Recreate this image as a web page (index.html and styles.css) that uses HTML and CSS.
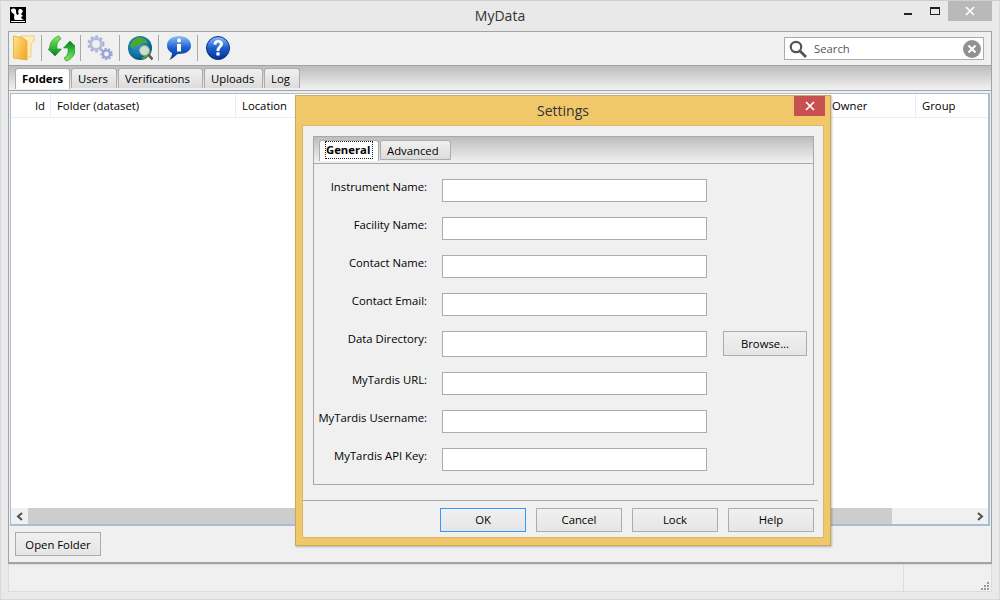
FILE: index.html
```html
<!doctype html>
<html lang="en">
<head>
	<meta charset="UTF-8" />
	<title>MyData</title>
	<link rel="stylesheet" href="styles.css">
</head>
<body>

<div class="window">
	<div class="titlebar">
		<svg class="app-icon" width="16" height="16" viewBox="0 0 16 16">
			<rect width="16" height="16" fill="#000"/>
			<path d="M1 3 C2 1 5 1 6 3 C6 5 6 6 7 8 L9 7 L8 5 L9 2 L11 2 L13 4 L12 6 L11 7 L13 9 L11 10 L12 12 L14 13 L5 13 C3 11 5 8 4 7 C3 6 1 6 1 3 Z" fill="#fff"/>
			<rect x="1" y="14" width="14" height="1" fill="#fff"/>
		</svg>
		<div class="title">MyData</div>
		<div class="winbtns">
			<span class="winbtn"><i class="min"></i></span>
			<span class="winbtn"><i class="max"></i></span>
			<span class="winbtn close">
				<svg width="10" height="10" viewBox="0 0 10 10"><path d="M1 1 L9 9 M9 1 L1 9" stroke="#fff" stroke-width="1.6"/></svg>
			</span>
		</div>
	</div>

	<div class="panel">
		<div class="toolbar">
			<svg class="tool" width="28" height="28" viewBox="0 0 28 28">
				<defs>
					<linearGradient id="fold" x1="0" y1="0" x2="1" y2="0.6"><stop offset="0" stop-color="#ffe68a"/><stop offset="1" stop-color="#f5ab2e"/></linearGradient>
				</defs>
				<path d="M11 2 L25 2 L25 7 L22 10 L22 23 L15 23 Z" fill="#fdeeb8" stroke="#ecc76a" stroke-width=".8"/>
				<path d="M4.5 2 L14 4 L18 7 L18 26 L4.5 24 Z" fill="url(#fold)" stroke="#e5ab3a" stroke-width=".8"/>
			</svg>
			<span class="sep"></span>
			<svg class="tool" width="28" height="28" viewBox="0 0 28 28">
				<defs>
					<linearGradient id="arrow" x1="0" y1="0" x2="0" y2="1"><stop offset="0" stop-color="#8fe85a"/><stop offset=".6" stop-color="#2cb53a"/><stop offset="1" stop-color="#0b7a1e"/></linearGradient>
				</defs>
				<g transform="translate(-1 0)">
					<path d="M13 2 C8 3 3.5 8 3.5 15 L2 15 L9 22 L15.5 15 L11 15 C10.5 10 11.5 7 15 5 Z" fill="url(#arrow)" stroke="#128a26" stroke-width=".6"/>
					<path d="M13 2 C8 3 3.5 8 3.5 15 L2 15 L9 22 L15.5 15 L11 15 C10.5 10 11.5 7 15 5 Z" transform="rotate(180 16.5 14.5)" fill="url(#arrow)" stroke="#128a26" stroke-width=".6"/>
				</g>
			</svg>
			<span class="sep"></span>
			<svg class="tool" width="28" height="28" viewBox="0 0 28 28">
				<circle cx="10" cy="10" r="5.4" fill="none" stroke="#b4bcdc" stroke-width="3"/>
				<circle cx="10" cy="10" r="7.6" fill="none" stroke="#a3add4" stroke-width="1.8" stroke-dasharray="2.6 2.4"/>
				<circle cx="20.5" cy="20" r="3.6" fill="none" stroke="#97a3d2" stroke-width="2.4"/>
				<circle cx="20.5" cy="20" r="5.4" fill="none" stroke="#8f9ccf" stroke-width="1.5" stroke-dasharray="2 1.8"/>
			</svg>
			<span class="sep"></span>
			<svg class="tool" width="28" height="28" viewBox="0 0 28 28">
				<defs>
					<radialGradient id="globe" cx=".4" cy=".35" r=".75"><stop offset="0" stop-color="#2f9ccc"/><stop offset=".65" stop-color="#0f6e9c"/><stop offset="1" stop-color="#0a3556"/></radialGradient>
				</defs>
				<circle cx="15" cy="14" r="12" fill="url(#globe)"/>
				<path d="M8 6 L14 3 L20 5 L23 9 L17 9 L14 12 L10 11 L8 15 L5 12 Z M16 24 L22 21 L24 18 L26 17 L24 22 L19 25 Z" fill="#4ea82e"/>
				<path d="M23 20 L27.5 25.5" stroke="#5a5a5a" stroke-width="2.6"/>
				<circle cx="19.5" cy="16.5" r="4.8" fill="#dfeccf" fill-opacity=".9" stroke="#b5b5b5"/>
			</svg>
			<span class="sep"></span>
			<svg class="tool" width="28" height="28" viewBox="0 0 28 28">
				<defs>
					<linearGradient id="blue" x1="0" y1="0" x2="0" y2="1"><stop offset="0" stop-color="#8cc0f7"/><stop offset=".5" stop-color="#1a5fd0"/><stop offset="1" stop-color="#0a2f90"/></linearGradient>
				</defs>
				<path d="M15 2 C22 2 27 6 27 11.5 C27 17 22 20 15 20 L13.5 20 C11 22.5 8 25 5 26 C7 24 8 21.5 8 19 C5 17.5 3 15 3 11.5 C3 6 8 2 15 2 Z" fill="url(#blue)"/>
				<circle cx="15" cy="6.5" r="2" fill="#fff"/>
				<rect x="13" y="10" width="4" height="7.5" fill="#fff"/>
			</svg>
			<span class="sep"></span>
			<svg class="tool" width="28" height="28" viewBox="0 0 28 28">
				<circle cx="15" cy="14" r="11.5" fill="url(#blue)" stroke="#0a2f90"/>
				<path d="M10.5 10.5 C10.5 7.5 12.5 6 15 6 C18 6 20 7.6 20 10 C20 13 16.5 13.5 16.5 17 L13.5 17 C13.5 12.5 16.8 12 16.8 10.2 C16.8 9 16 8.6 15 8.6 C14 8.6 13.5 9.4 13.5 10.8 Z" fill="#fff"/>
				<rect x="13.4" y="18.3" width="3.2" height="3.2" fill="#fff"/>
			</svg>
			<div class="search">
				<svg width="18" height="18" viewBox="0 0 18 18">
					<circle cx="7" cy="7" r="5.2" fill="none" stroke="#555" stroke-width="2.2"/>
					<path d="M11 11 L17 17" stroke="#555" stroke-width="2.8"/>
				</svg>
				<span class="search-text">Search</span>
				<svg width="18" height="18" viewBox="0 0 18 18">
					<circle cx="9" cy="9" r="9" fill="#919191"/>
					<path d="M5.5 5.5 L12.5 12.5 M12.5 5.5 L5.5 12.5" stroke="#fff" stroke-width="2"/>
				</svg>
			</div>
		</div>

		<div class="tabband">
			<span class="tab active">Folders</span>
			<span class="tab w-users">Users</span>
			<span class="tab w-verif">Verifications</span>
			<span class="tab w-up">Uploads</span>
			<span class="tab w-log">Log</span>
		</div>

		<div class="list">
			<div class="list-head">
				<span class="col c-id">Id</span>
				<span class="col c-folder">Folder (dataset)</span>
				<span class="col c-loc">Location</span>
				<span class="col c-owner">Owner</span>
				<span class="col c-group">Group</span>
			</div>
			<div class="list-body"></div>
			<div class="hscroll">
				<span class="arrow">
					<svg width="8" height="9" viewBox="0 0 8 9"><path d="M6 1 L2 4.5 L6 8" fill="none" stroke="#505050" stroke-width="2"/></svg>
				</span>
				<span class="thumb"></span>
				<span class="arrow">
					<svg width="8" height="9" viewBox="0 0 8 9"><path d="M2 1 L6 4.5 L2 8" fill="none" stroke="#505050" stroke-width="2"/></svg>
				</span>
			</div>
		</div>

		<div class="panel-foot">
			<button class="btn">Open Folder</button>
		</div>
	</div>

	<div class="statusbar">
		<span class="status-main"></span>
		<span class="status-side">
			<svg class="grip" width="9" height="9" viewBox="0 0 9 9" fill="#9a9a9a">
				<rect x="6" y="0" width="2" height="2"/>
				<rect x="3" y="3" width="2" height="2"/><rect x="6" y="3" width="2" height="2"/>
				<rect x="0" y="6" width="2" height="2"/><rect x="3" y="6" width="2" height="2"/><rect x="6" y="6" width="2" height="2"/>
			</svg>
		</span>
	</div>

	<div class="dialog">
		<div class="dlg-title">
			<span>Settings</span>
			<span class="dlg-close">
				<svg width="10" height="10" viewBox="0 0 10 10"><path d="M1 1 L9 9 M9 1 L1 9" stroke="#fff" stroke-width="1.6"/></svg>
			</span>
		</div>
		<div class="dlg-body">
			<div class="notebook">
				<div class="nb-tabs">
					<span class="nb-tab active"><span class="focus">General</span></span>
					<span class="nb-tab">Advanced</span>
				</div>
				<div class="form">
					<label>Instrument Name:</label><input class="field" type="text"><span></span>
					<label>Facility Name:</label><input class="field" type="text"><span></span>
					<label>Contact Name:</label><input class="field" type="text"><span></span>
					<label>Contact Email:</label><input class="field" type="text"><span></span>
					<label>Data Directory:</label><input class="field tall" type="text"><button class="btn browse">Browse...</button>
					<label>MyTardis URL:</label><input class="field" type="text"><span></span>
					<label>MyTardis Username:</label><input class="field" type="text"><span></span>
					<label>MyTardis API Key:</label><input class="field" type="text"><span></span>
				</div>
			</div>
			<div class="dlg-line"></div>
			<div class="dlg-btns">
				<button class="btn default">OK</button>
				<button class="btn">Cancel</button>
				<button class="btn">Lock</button>
				<button class="btn">Help</button>
			</div>
		</div>
	</div>
</div>

</body>
</html>
```

FILE: styles.css
```css
body{
	margin: 0;
	padding: 0;
	font-size: 11.3px;
	font-family: "Open Sans", "Noto Sans", sans-serif;
	color: #000;
}
.window{
	position: relative;
	width: 1000px;
	height: 600px;
	box-sizing: border-box;
	background: #e9e9e9;
	border: 1px solid #d8d8d8;
	border-top-color: #cfcfcf;
	padding: 0 7px;
	overflow: hidden;
}
.titlebar{
	position: relative;
	height: 30px;
	display: flex;
	align-items: flex-start;
	justify-content: center;
}
.app-icon{
	position: absolute;
	left: 2px;
	top: 6px;
}
.title{
	font-size: 14px;
	line-height: 29px;
	color: #333;
}
.winbtns{
	position: absolute;
	right: 0;
	top: 0;
	display: flex;
}
.winbtn{
	width: 28px;
	height: 20px;
	display: flex;
	align-items: center;
	justify-content: center;
}
.winbtn .min{
	width: 8px;
	height: 2px;
	background: #222;
	margin: 6px 0 0 4px;
}
.winbtn .max{
	width: 8px;
	height: 5px;
	border: 1px solid #222;
	border-top-width: 2px;
	margin-left: 2px;
}
.winbtn.close{
	width: 44px;
	background: #b9b9b9;
}
.panel{
	height: 533px;
	box-sizing: border-box;
	border: 1px solid #a3a3a3;
	border-width: 1px 1px 2px 1px;
	background: #f0f0f0;
	display: flex;
	flex-direction: column;
}
.toolbar{
	height: 33px;
	box-sizing: border-box;
	display: flex;
	align-items: center;
	padding: 0 7px 1px 0;
	gap: 5px;
}
.tool{
	flex: none;
}
.tool:first-child{
	margin-right: -1px;
}
.sep{
	width: 1px;
	height: 26px;
	background: #a8a8a8;
}
.search{
	margin: 1px 0 0 auto;
	width: 200px;
	height: 23px;
	box-sizing: border-box;
	border: 1px solid #acacac;
	background: #fff;
	display: flex;
	align-items: center;
	padding: 0 2px 0 4px;
}
.search-text{
	flex: 1;
	padding-left: 7px;
	color: #555;
}
.tabband{
	height: 26px;
	box-sizing: border-box;
	border-top: 1px solid #a3a3a3;
	border-bottom: 1px solid #a3a3a3;
	background: linear-gradient(#bdbdbd, #f2f2f2);
	display: flex;
	align-items: flex-end;
	padding: 0 0 2px 6px;
	gap: 1px;
}
.tab{
	height: 20px;
	box-sizing: border-box;
	border: 1px solid #acacac;
	border-bottom: 0;
	border-radius: 3px 3px 0 0;
	background: linear-gradient(#f0f0f0, #dcdcdc);
	line-height: 19px;
	padding-left: 6px;
}
.tab.active{
	width: 55px;
	height: 21px;
	margin-bottom: -1px;
	background: #fff;
	font-weight: bold;
}
.w-users{ width: 46px; }
.w-verif{ width: 85px; }
.w-up{ width: 59px; }
.w-log{ width: 36px; }
.list{
	flex: 1;
	margin: 2px 1px 0 1px;
	border: 1px solid #a9bcd6;
	border-width: 1px 2px 2px 1px;
	background: #fff;
	display: flex;
	flex-direction: column;
}
.list-head{
	height: 24px;
	box-sizing: border-box;
	border-bottom: 1px solid #e6eef7;
	display: flex;
	line-height: 23px;
}
.col{
	box-sizing: border-box;
	border-right: 1px solid #e6eef7;
	padding-left: 6px;
}
.c-id{ width: 40px; text-align: right; padding-right: 5px; }
.c-folder{ width: 185px; }
.c-loc{ width: 590px; }
.c-owner{ width: 90px; }
.c-group{ border-right: 0; flex: 1; }
.list-body{
	flex: 1;
}
.hscroll{
	height: 16px;
	display: flex;
	background: #f0f0f0;
}
.arrow{
	width: 17px;
	display: flex;
	align-items: center;
	justify-content: center;
}
.thumb{
	width: 864px;
	background: #cdcdcd;
	margin-right: auto;
}
.panel-foot{
	height: 36px;
	box-sizing: border-box;
	padding: 6px 6px 0;
}
.btn{
	width: 86px;
	height: 24px;
	box-sizing: border-box;
	padding: 0;
	border: 1px solid #acacac;
	background: linear-gradient(#f0f0f0, #e5e5e5);
	font: inherit;
	color: #000;
}
.btn.default{
	border-color: #3399ff;
}
.statusbar{
	height: 28px;
	box-sizing: border-box;
	border: 1px solid #dcdcdc;
	background: #f0f0f0;
	display: flex;
}
.status-main{
	flex: 1;
	border-right: 1px solid #dcdcdc;
}
.status-side{
	width: 86px;
	display: flex;
	align-items: flex-end;
	justify-content: flex-end;
	padding: 0 1px 0 0;
}
.dialog{
	position: absolute;
	left: 294px;
	top: 94px;
	width: 536px;
	height: 451px;
	box-sizing: border-box;
	border: 1px solid #c9a95e;
	background: #f0c869;
	box-shadow: 1px 1px 2px rgba(0, 0, 0, 0.25);
	padding: 0 6px 7px;
	display: flex;
	flex-direction: column;
}
.dlg-title{
	position: relative;
	height: 29px;
	flex: none;
	text-align: center;
	font-size: 14px;
	line-height: 30px;
	color: #333;
}
.dlg-close{
	position: absolute;
	right: -1px;
	top: 0;
	width: 31px;
	height: 20px;
	background: #c75050;
	display: flex;
	align-items: center;
	justify-content: center;
}
.dlg-body{
	flex: 1;
	background: #f0f0f0;
	border: 1px solid #d8b868;
	padding: 10px 0 0 10px;
}
.notebook{
	width: 501px;
	height: 349px;
	box-sizing: border-box;
	border: 1px solid #a8a8a8;
	background: #f0f0f0;
}
.nb-tabs{
	height: 27px;
	box-sizing: border-box;
	border-bottom: 1px solid #a8a8a8;
	background: linear-gradient(#bdbdbd, #f2f2f2);
	display: flex;
	align-items: flex-end;
	padding: 0 0 3px 5px;
	gap: 1px;
}
.nb-tab{
	height: 20px;
	width: 71px;
	box-sizing: border-box;
	border: 1px solid #acacac;
	border-radius: 3px 3px 0 0;
	background: linear-gradient(#f0f0f0, #dcdcdc);
	line-height: 19px;
	padding-left: 6px;
}
.nb-tab.active{
	width: 60px;
	height: 21px;
	margin-bottom: -1px;
	background: #fff;
	border-bottom: 0;
	font-weight: bold;
	padding: 0 5px;
	line-height: 16px;
}
.focus{
	display: block;
	border: 1px dotted #222;
}
.form{
	display: grid;
	grid-template-columns: 113px 265px 85px;
	column-gap: 15px;
	row-gap: 15px;
	align-items: start;
	padding: 15px 0 0 0;
}
.form label{
	text-align: right;
	line-height: 16px;
	white-space: nowrap;
}
.field{
	height: 23px;
	box-sizing: border-box;
	border: 1px solid #acacac;
	background: #fff;
	padding: 0;
	margin: 0;
}
.field.tall{
	height: 26px;
}
.btn.browse{
	width: 84px;
	height: 25px;
	margin-left: 1px;
}
.dlg-line{
	width: 515px;
	height: 1px;
	margin: 15px 0 0 -10px;
	background: #a8a8a8;
}
.dlg-btns{
	width: 501px;
	display: flex;
	justify-content: flex-end;
	gap: 10px;
	padding-top: 7px;
}
.dlg-btns .btn{
	padding-bottom: 2px;
}
```
